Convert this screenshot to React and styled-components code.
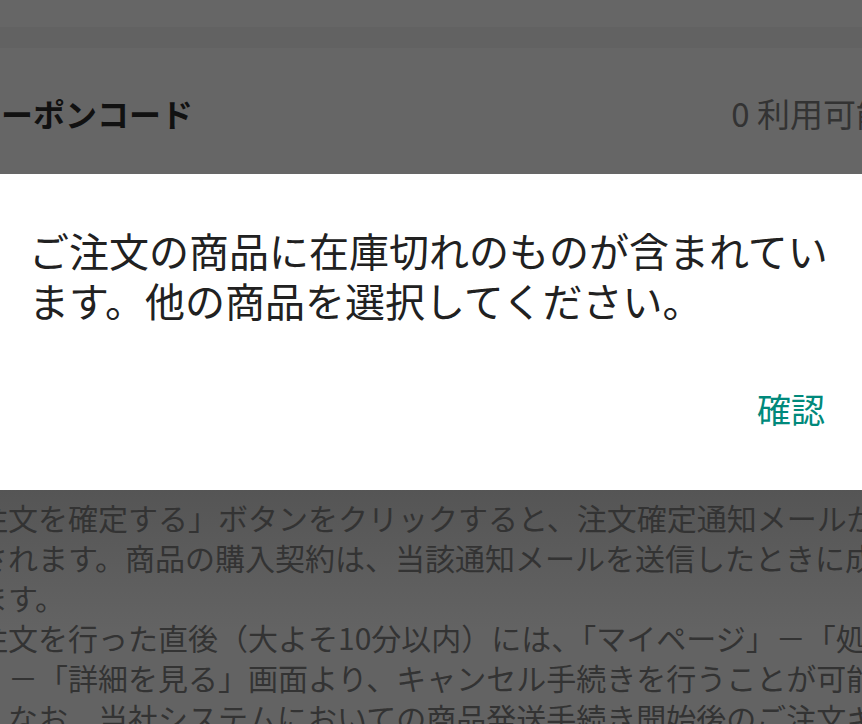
import styled, { createGlobalStyle } from "styled-components";

const GlobalStyle = createGlobalStyle`
  html, body {
    margin: 0;
    padding: 0;
    background: #666666;
  }
  body {
    font-family: "Noto Sans CJK JP", "Noto Sans", sans-serif;
    overflow: hidden;
  }
`;

const notes = [
  "注文を確定する」ボタンをクリックすると、注文確定通知メールが送信",
  "されます。商品の購入契約は、当該通知メールを送信したときに成立し",
  "ます。",
  "注文を行った直後（大よそ10分以内）には、「マイページ」－「処理中",
  "」－「詳細を見る」画面より、キャンセル手続きを行うことが可能です。",
  "。なお、当社システムにおいての商品発送手続き開始後のご注文キャンセル",
];

const App = () => {
  return (
    <Page>
      <GlobalStyle />
      <TopBar />
      <Divider />
      <CouponRow>
        <CouponLabel>クーポンコード</CouponLabel>
        <CouponCount>0 利用可能</CouponCount>
      </CouponRow>
      <Dialog>
        <Message>
          ご注文の商品に在庫切れのものが含まれています。他の商品を選択してください。
        </Message>
        <Actions>
          <ConfirmButton>確認</ConfirmButton>
        </Actions>
      </Dialog>
      <Notes>
        {notes.map((line, i) => (
          <NoteLine key={i}>{line}</NoteLine>
        ))}
      </Notes>
    </Page>
  );
};

const Page = styled.div`
  width: 862px;
  height: 724px;
  display: flex;
  flex-direction: column;
  overflow: hidden;
  background: #666666;
`;

const TopBar = styled.div`
  height: 27px;
  background: #666666;
`;

const Divider = styled.div`
  height: 21px;
  background: #626262;
`;

const CouponRow = styled.div`
  height: 126px;
  display: flex;
  align-items: center;
  justify-content: space-between;
  padding-top: 4px;
  box-sizing: border-box;
  background: #666666;
`;

const CouponLabel = styled.span`
  margin-left: -31px;
  font-size: 32px;
  font-weight: 700;
  color: #111111;
  white-space: nowrap;
`;

const CouponCount = styled.span`
  margin-right: -27px;
  font-size: 33px;
  color: #333333;
  white-space: nowrap;
`;

const Dialog = styled.div`
  height: 316px;
  box-sizing: border-box;
  background: #ffffff;
  padding: 51px 26px 0 29px;
  display: flex;
  flex-direction: column;
`;

const Message = styled.p`
  margin: 0;
  font-size: 40px;
  line-height: 50px;
  color: #212121;
`;

const Actions = styled.div`
  display: flex;
  justify-content: flex-end;
  margin-top: 59px;
  padding-right: 11px;
`;

const ConfirmButton = styled.button`
  border: none;
  background: none;
  padding: 0;
  font-family: inherit;
  font-size: 34px;
  line-height: 50px;
  color: #00897b;
  cursor: pointer;
`;

const Notes = styled.div`
  flex: 1;
  padding-top: 7px;
  overflow: hidden;
  background: linear-gradient(#555555, #636363 60%);
`;

const NoteLine = styled.div`
  margin-left: -22px;
  font-size: 30px;
  line-height: 40px;
  color: #333333;
  white-space: nowrap;
`;

export default App;
